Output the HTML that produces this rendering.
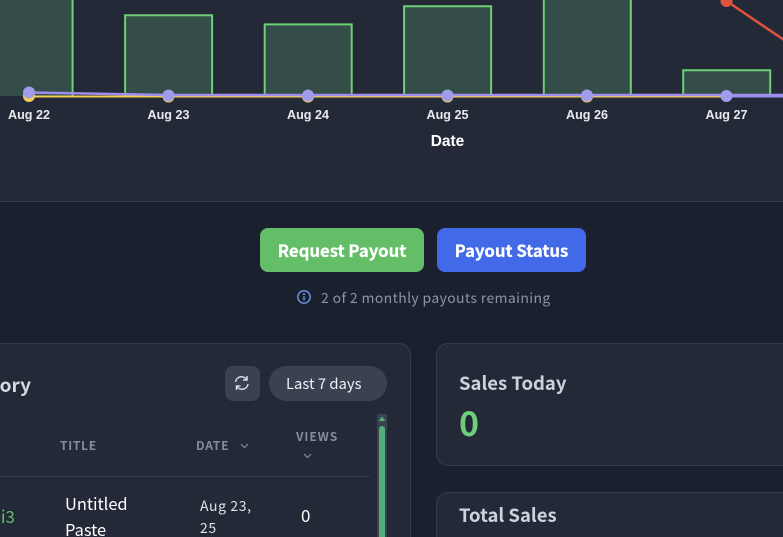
<!DOCTYPE html>
<html><head><meta charset="utf-8"><style>
html,body{margin:0;padding:0;width:783px;height:537px;overflow:hidden;background:#1b202e;}
body{position:relative;font-family:"Noto Sans CJK JP","Liberation Sans",sans-serif;}
.a{position:absolute;white-space:nowrap;line-height:1;}
.card{position:absolute;background:#232937;border:1px solid #343b4a;box-sizing:border-box;}
.l{font-family:"Liberation Sans",sans-serif;font-size:12.6px;color:#e8eaee;font-weight:700;transform:translateX(-50%);}
.btn{position:absolute;top:228px;height:44px;border-radius:8px;color:#fff;font-weight:700;font-size:16.7px;text-align:center;line-height:44px;-webkit-text-stroke:.25px #fff;}
.th{color:#858c9b;font-size:12px;font-weight:700;letter-spacing:.7px;}
</style></head><body>
<div class="a" style="left:0;top:0;width:783px;height:201px;background:#232937;border-bottom:1px solid #363c4a;"></div>
<svg class="a" style="left:0;top:0" width="783" height="110" viewBox="0 0 783 110">
<g fill="#354d49" stroke="#6ecf76" stroke-width="2">
<path d="M-20 96V-20H72.600V96"/>
<path d="M125.100 96V15.200H212.100V96"/>
<path d="M264.700 96V24.400H351.700V96"/>
<path d="M404.100 96V6.200H491.100V96"/>
<path d="M543.800 96V-20H630.800V96"/>
<path d="M683.200 96V70.200H770.200V96"/>
</g>
<line x1="726.500" y1="1" x2="790" y2="44" stroke="#e0533d" stroke-width="2.500"/>
<circle cx="726.500" cy="1" r="6" fill="#e0533d"/>
<line x1="29" y1="96.500" x2="726" y2="96.500" stroke="#f4cf57" stroke-width="2"/>
<path d="M29 92.500 L168.500 95 L783 95" fill="none" stroke="#9d8ef0" stroke-width="2.500"/>
<line x1="726" y1="96" x2="783" y2="96" stroke="#9d8ef0" stroke-width="3"/>
<g fill="#f4cf57">
<circle cx="29" cy="96" r="6"/><circle cx="168.500" cy="96.500" r="6"/><circle cx="308" cy="96.500" r="6"/><circle cx="447.500" cy="96.500" r="6"/><circle cx="587" cy="96.500" r="6"/>
</g>
<g fill="#a09ceb">
<circle cx="29" cy="92.500" r="6"/><circle cx="168.500" cy="95.500" r="6"/><circle cx="308" cy="95.500" r="6"/><circle cx="447.500" cy="95.500" r="6"/><circle cx="587" cy="95.500" r="6"/><circle cx="726.500" cy="96" r="6"/>
</g>
</svg>
<div class="a l" style="left:29px;top:109px">Aug 22</div>
<div class="a l" style="left:168.500px;top:109px">Aug 23</div>
<div class="a l" style="left:308px;top:109px">Aug 24</div>
<div class="a l" style="left:447.500px;top:109px">Aug 25</div>
<div class="a l" style="left:587px;top:109px">Aug 26</div>
<div class="a l" style="left:726.500px;top:109px">Aug 27</div>
<div class="a l" style="left:447.500px;top:134px;font-size:15.500px;color:#fff">Date</div>

<div class="btn" style="left:260px;width:164px;background:#64be67">Request Payout</div>
<div class="btn" style="left:437px;width:149px;background:#4169e8">Payout Status</div>
<svg class="a" style="left:297px;top:290px" width="14" height="14" viewBox="0 0 14 14" fill="none"><circle cx="7" cy="7" r="6.200" stroke="#6f9be8" stroke-width="1.400"/><line x1="7" y1="6.200" x2="7" y2="10.200" stroke="#6f9be8" stroke-width="1.500"/><circle cx="7" cy="4.100" r="1" fill="#6f9be8"/></svg>
<div class="a" style="left:321px;top:291px;font-size:14px;color:#8b95a7;letter-spacing:.36px">2 of 2 monthly payouts remaining</div>

<div class="card" style="left:-20px;top:343px;width:431px;height:194px;border-radius:12px 12px 0 0;border-bottom:0"></div>
<div class="a" style="left:-8px;top:375px;width:39px;text-align:right;font-size:19px;font-weight:700;color:#d5dae3;direction:rtl">ory</div>
<div class="a" style="left:225px;top:366px;width:35px;height:35px;border-radius:8px;background:#3a4151"></div>
<svg class="a" style="left:233px;top:374px" width="18" height="18" viewBox="0 0 18 18" fill="none" stroke="#d8dbe2" stroke-width="1.500"><path d="M2.500 8a6 6 0 0 1 11-2.500"/><path d="M14 2v4h-4"/><path d="M15 10a6 6 0 0 1-11 2.500"/><path d="M3.500 16v-4h4"/></svg>
<div class="a" style="left:269px;top:366px;width:118px;height:35px;border-radius:18px;background:#3a4151"></div>
<div class="a" style="left:286px;top:377px;font-size:14.800px;color:#f0f1f4">Last 7 days</div>

<div class="a th" style="left:60px;top:440px">TITLE</div>
<div class="a th" style="left:196px;top:440px;letter-spacing:.8px">DATE</div>
<svg class="a" style="left:240px;top:443px" width="9" height="6" viewBox="0 0 9 6" fill="none" stroke="#858c9b" stroke-width="1.200"><path d="M1 1l3.500 3.500L8 1"/></svg>
<div class="a th" style="left:296px;top:431px;letter-spacing:1px">VIEWS</div>
<svg class="a" style="left:303px;top:453px" width="9" height="6" viewBox="0 0 9 6" fill="none" stroke="#858c9b" stroke-width="1.200"><path d="M1 1l3.500 3.500L8 1"/></svg>
<div class="a" style="left:0;top:476px;width:370px;height:1px;background:#343b4a"></div>
<div class="a" style="left:-2px;top:507px;font-size:17px;color:#5fbf68;width:17px;overflow:hidden;direction:rtl">i3</div>
<div class="a" style="left:65px;top:490px;height:47px;overflow:hidden;font-size:16.400px;color:#fff;line-height:26px">Untitled<br>Paste</div>
<div class="a" style="left:200px;top:495px;font-size:14px;color:#dfe2e8;line-height:22px;letter-spacing:.6px">Aug 23,<br>25</div>
<div class="a" style="left:301px;top:506px;font-size:17px;color:#fff">0</div>

<div class="a" style="left:377px;top:414px;width:10px;height:123px;background:#3a4151"></div>
<div class="a" style="left:379px;top:426px;width:6px;height:111px;background:#52ad78;border-radius:3px 3px 0 0"></div>
<svg class="a" style="left:378px;top:416px" width="8" height="6"><path d="M4 0.500L7.500 5H0.500Z" fill="#52ad78"/></svg>

<div class="card" style="left:436px;top:343px;width:347px;height:123px;border-radius:12px 0 0 12px;border-right:0"></div>
<div class="a" style="left:459px;top:374px;font-size:18.500px;font-weight:700;color:#ccd3df">Sales Today</div>
<div class="a" style="left:459px;top:405px;font-size:34px;font-weight:700;color:#6dcf78">0</div>
<div class="card" style="left:436px;top:492px;width:347px;height:45px;border-radius:12px 0 0 0;border-right:0;border-bottom:0"></div>
<div class="a" style="left:459px;top:506px;font-size:18.500px;font-weight:700;color:#ccd3df">Total Sales</div>
</body></html>
